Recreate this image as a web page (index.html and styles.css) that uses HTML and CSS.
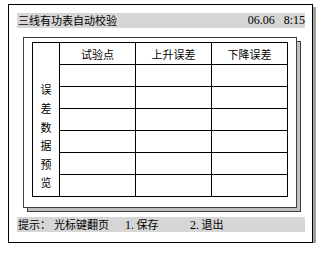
FILE: index.html
```html
<!DOCTYPE html>
<html>
<head>
<meta charset="utf-8">
<link rel="stylesheet" href="styles.css">
</head>
<body>
<div class="screen">
  <div class="titlebar">
    <span class="title">三线有功表自动校验</span>
    <span class="clock">06.06&nbsp;&nbsp;&nbsp;8:15</span>
  </div>
  <div class="panel">
    <div class="grid">
      <div class="side"><span>误</span><span>差</span><span>数</span><span>据</span><span>预</span><span>览</span></div>
      <div class="head">试验点</div>
      <div class="head">上升误差</div>
      <div class="head">下降误差</div>
      <div></div><div></div><div></div>
      <div></div><div></div><div></div>
      <div></div><div></div><div></div>
      <div></div><div></div><div></div>
      <div></div><div></div><div></div>
      <div></div><div></div><div></div>
    </div>
  </div>
  <div class="hintbar">
    <span class="h1">提示：</span><span class="h2">光标键翻页</span><span class="h3"><span class="num">1.</span> 保存</span><span class="h4"><span class="num">2.</span> 退出</span>
  </div>
</div>
</body>
</html>
```
FILE: styles.css
```css
html, body {
  margin: 0;
  padding: 0;
  background: #fff;
}
body {
  font-family: "Noto Sans CJK SC", "Liberation Sans", sans-serif;
  font-size: 11px;
  color: #000;
}
.screen {
  margin: 4px 0 0 8px;
  width: 303px;
  height: 237px;
  border: 1px solid #000;
  box-shadow: 3px 3px 0 #a0a0a0;
  display: flex;
  flex-direction: column;
}
.titlebar {
  margin: 8px 7px 0 8px;
  height: 15px;
  background: #d6d6d6;
  display: flex;
  justify-content: space-between;
  align-items: center;
  line-height: 15px;
}
.title {
  padding-left: 1px;
}
.clock {
  font-family: "Liberation Serif", serif;
  font-size: 12px;
  padding-right: 0;
}
.panel {
  margin: 9px 0 0 14px;
  width: 256px;
  height: 155px;
  padding: 4px 8px 10px 8px;
  border: 1px solid #404040;
  box-shadow: 4px 4px 0 -1px #c0c0c0, 4px 4px 0 0 #404040;
  background: #fff;
}
.grid {
  display: grid;
  grid-template-columns: 26px 75px 75px 75px;
  grid-template-rows: repeat(7, 21px);
  gap: 1px;
  padding: 1px;
  background: #000;
  width: 254px;
}
.grid > div {
  background: #fff;
}
.side {
  grid-row: 1 / span 7;
  display: flex;
  flex-direction: column;
  justify-content: flex-end;
  align-items: center;
  padding-bottom: 4px;
}
.side span {
  line-height: 18.6px;
  height: 18.6px;
}
.head {
  display: flex;
  align-items: center;
  justify-content: center;
}
.hintbar {
  margin: 9px 7px 0 8px;
  height: 15px;
  line-height: 15px;
  background: #d6d6d6;
  display: flex;
}
.h1 {
  padding-left: 1px;
  width: 36px;
}
.h2 {
  width: 71px;
}
.h3 {
  width: 65px;
}
.num {
  font-family: "Liberation Serif", serif;
  font-size: 12px;
}
```
